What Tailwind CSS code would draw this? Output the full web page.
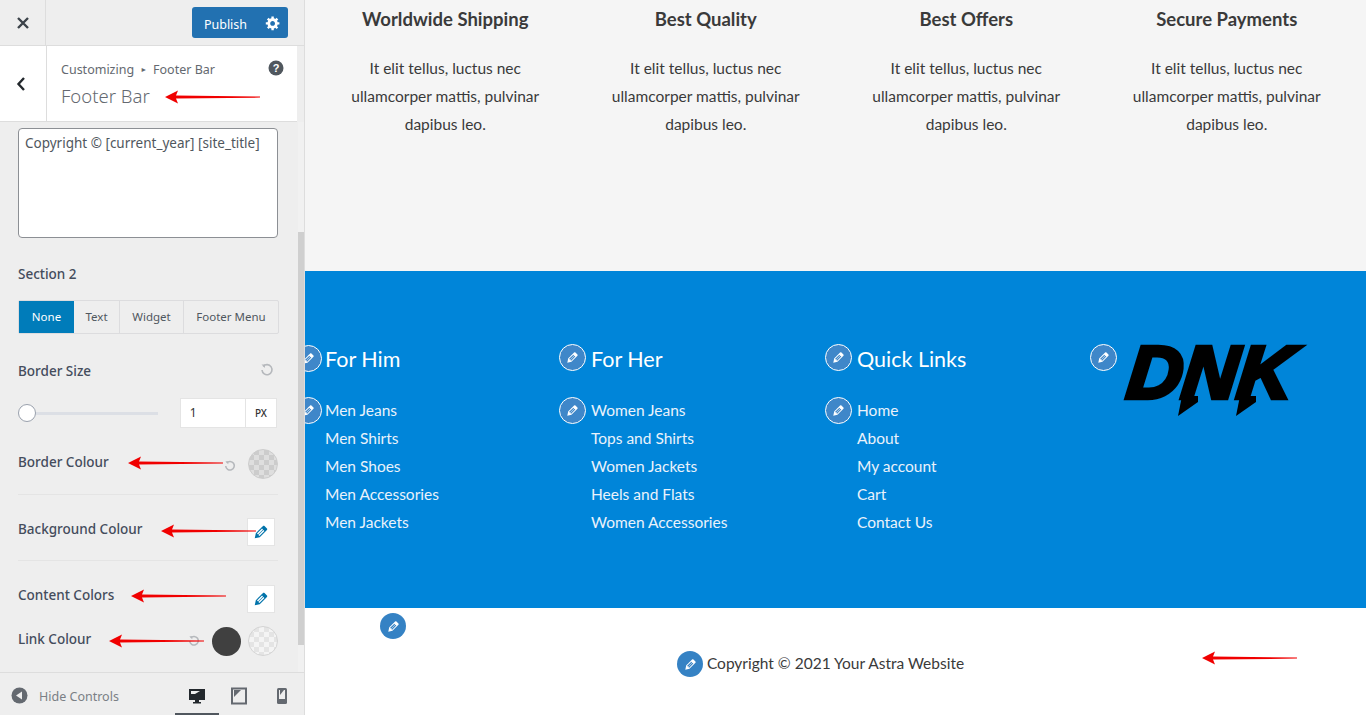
<!doctype html>
<html lang="en">

<head>
  <meta charset="UTF-8" />
  <meta name="viewport" content="width=device-width, initial-scale=1.0" />
  <title>Customizing Footer Bar</title>
  <script src="https://cdn.jsdelivr.net/npm/@tailwindcss/browser@4"></script>
</head>

<body class="h-[715px] w-[1366px] overflow-hidden bg-white font-['Lato',sans-serif] flex relative">

  <!-- customizer sidebar -->
  <aside class="w-[305px] h-[715px] shrink-0 bg-[#eeeeee] flex flex-col relative font-['Noto_Sans',sans-serif] text-[#444c5c] border-r border-[#dddddd]">
    <!-- top bar -->
    <div class="h-[46px] shrink-0 flex items-center border-b border-[#dddddd] pr-[16px]">
      <div class="w-[46px] h-full flex items-center justify-center border-r border-[#dddddd]">
        <svg width="14" height="14" viewBox="0 0 14 14" class="text-[#3c434a]"><path d="M2 2l10 10M12 2L2 12" stroke="currentColor" stroke-width="2.4" /></svg>
      </div>
      <div class="ml-auto flex h-[31px] w-[96px] rounded-[3px] bg-[#2271b1] text-white items-center">
        <span class="w-[66px] text-center text-[12.5px] pt-[5px] pl-[1px]">Publish</span>
        <svg width="16" height="16" viewBox="0 0 20 20" class="ml-[7px]" fill="currentColor"><path d="M18 12h-2.18c-.17.7-.44 1.35-.81 1.93l1.54 1.54-2.1 2.1-1.54-1.54c-.58.36-1.23.63-1.91.79V19H8v-2.18c-.68-.16-1.33-.43-1.91-.79l-1.54 1.54-2.12-2.12 1.54-1.54c-.36-.58-.63-1.23-.79-1.91H1V9.03h2.17c.16-.7.44-1.35.8-1.94L2.43 5.55l2.1-2.1 1.54 1.54c.58-.37 1.24-.64 1.93-.81V2h3v2.18c.68.16 1.33.43 1.91.79l1.54-1.54 2.12 2.12-1.54 1.54c.36.59.64 1.24.8 1.94H18V12zm-8.5 1.5c1.66 0 3-1.34 3-3s-1.34-3-3-3-3 1.34-3 3 1.34 3 3 3z" /></svg>
      </div>
    </div>

    <!-- section title -->
    <div class="h-[76px] w-[297px] shrink-0 bg-white flex border-b border-[#dddddd]">
      <div class="w-[47px] h-full flex items-center justify-center border-r border-[#dddddd] pr-[4px]">
        <svg width="10" height="16" viewBox="0 0 10 16"><path d="M8 2L2.5 8 8 14" fill="none" stroke="#23282d" stroke-width="2.4" /></svg>
      </div>
      <div class="pl-[14px] pt-[15px] flex-1 relative">
        <div class="text-[12.5px] leading-[18px] text-[#646970] flex items-center">Customizing <span class="text-[7px] mx-[6px]">&#9658;</span> Footer Bar</div>
        <div class="text-[18.5px] leading-[28px] text-[#646970] mt-[3px] font-light">Footer Bar</div>
        <svg width="16" height="16" viewBox="0 0 16 16" class="absolute right-[13px] top-[14px]"><circle cx="8" cy="8" r="7.5" fill="#50575e" /><text x="8" y="12" text-anchor="middle" font-size="11" font-weight="700" fill="#fff" font-family="Liberation Sans">?</text></svg>
      </div>
    </div>

    <!-- controls -->
    <div class="flex-1 pl-[18px] pr-[27px] pt-[6px] relative overflow-hidden">
      <div class="w-[260px] h-[110px] rounded-[4px] border border-[#8c8f94] bg-white px-[6px] py-[4px] text-[13.5px] leading-[20px] text-[#50575e]">Copyright © [current_year] [site_title]</div>

      <div class="mt-[26px] text-[13.5px] leading-[20px] font-medium">Section 2</div>
      <div class="mt-[16px] flex h-[34px] w-[261px] border border-[#dcdcde] rounded-[2px] text-[11.5px] text-[#50575e]">
        <div class="w-[55px] bg-[#007cba] text-white flex items-center justify-center">None</div>
        <div class="w-[46px] border-r border-[#dcdcde] flex items-center justify-center">Text</div>
        <div class="w-[64px] border-r border-[#dcdcde] flex items-center justify-center">Widget</div>
        <div class="flex-1 flex items-center justify-center">Footer Menu</div>
      </div>

      <div class="mt-[26px] flex items-center justify-between h-[20px]">
        <span class="text-[13.5px] font-medium pt-[2px]">Border Size</span>
        <svg width="14" height="14" viewBox="0 0 14 14" class="mr-[3px]"><path d="M3.2 3.4A5 5 0 1 1 2 7" fill="none" stroke="#b5b8bc" stroke-width="1.6" /><path d="M1.5 1.5h3.5v3.5z" fill="#b5b8bc" /></svg>
      </div>
      <div class="mt-[18px] flex items-center h-[30px]">
        <div class="relative w-[141px] h-[3px] bg-[#dcdfe5]">
          <div class="absolute left-0 top-[-8px] w-[18px] h-[18px] rounded-full bg-white border border-[#9aa1ad]"></div>
        </div>
        <div class="ml-[22px] flex h-[30px] w-[98px] bg-white border border-[#e4e4e4] text-[12px] text-[#333333] items-center">
          <span class="w-[65px] pl-[9px] border-r border-[#e4e4e4] leading-[28px]">1</span>
          <span class="flex-1 text-center text-[10px] font-medium">PX</span>
        </div>
      </div>

      <div class="mt-[21px] flex items-center h-[30px] w-[260px]">
        <span class="text-[13.5px] font-medium mb-[3px]">Border Colour</span>
        <svg width="12" height="12" viewBox="0 0 14 14" class="ml-auto mr-[12px] mt-[4px]"><path d="M3.2 3.4A5 5 0 1 1 2 7" fill="none" stroke="#b5b8bc" stroke-width="1.8" /><path d="M1.5 1.5h3.5v3.5z" fill="#b5b8bc" /></svg>
        <div class="w-[30px] h-[30px] rounded-full border border-[#cccccc] bg-[repeating-conic-gradient(#cccccc_0_25%,#dedede_0_50%)] bg-[length:10px_10px]"></div>
      </div>
      <div class="mt-[15px] w-[260px] border-t border-[#e4e4e4]"></div>

      <div class="mt-[23px] flex items-center h-[28px] w-[257px]">
        <span class="text-[13.5px] font-medium mb-[6px]">Background Colour</span>
        <div class="ml-auto w-[28px] h-[28px] bg-white border border-[#e4e4e4] flex items-center justify-center">
          <svg width="18" height="18" viewBox="0 0 20 20" fill="#0073aa"><path d="M13.89 3.39l2.71 2.72c.46.46.42 1.24.03 1.64l-8.01 8.02-5.56 1.16 1.16-5.58s7.6-7.63 7.99-8.03c.39-.39 1.22-.39 1.68.07zm-2.73 2.79l-5.59 5.61 1.11 1.11 5.54-5.65zm-2.97 8.23l5.58-5.6-1.07-1.08-5.59 5.6z" /></svg>
        </div>
      </div>
      <div class="mt-[14px] w-[260px] border-t border-[#e4e4e4]"></div>

      <div class="mt-[24px] flex items-center h-[28px] w-[257px]">
        <span class="text-[13.5px] font-medium mb-[8px]">Content Colors</span>
        <div class="ml-auto w-[28px] h-[28px] bg-white border border-[#e4e4e4] flex items-center justify-center">
          <svg width="18" height="18" viewBox="0 0 20 20" fill="#0073aa"><path d="M13.89 3.39l2.71 2.72c.46.46.42 1.24.03 1.64l-8.01 8.02-5.56 1.16 1.16-5.58s7.6-7.63 7.99-8.03c.39-.39 1.22-.39 1.68.07zm-2.73 2.79l-5.59 5.61 1.11 1.11 5.54-5.65zm-2.97 8.23l5.58-5.6-1.07-1.08-5.59 5.6z" /></svg>
        </div>
      </div>

      <div class="mt-[13px] flex items-center h-[30px] w-[260px]">
        <span class="text-[13.5px] font-medium mb-[3px]">Link Colour</span>
        <svg width="12" height="12" viewBox="0 0 14 14" class="ml-auto mr-[12px]"><path d="M3.2 3.4A5 5 0 1 1 2 7" fill="none" stroke="#b5b8bc" stroke-width="1.8" /><path d="M1.5 1.5h3.5v3.5z" fill="#b5b8bc" /></svg>
        <div class="w-[29px] h-[29px] rounded-full bg-[#404040] mr-[7px]"></div>
        <div class="w-[30px] h-[30px] rounded-full border border-[#d4d4d4] bg-[repeating-conic-gradient(#e4e4e4_0_25%,#f4f4f4_0_50%)] bg-[length:10px_10px]"></div>
      </div>
    </div>

    <!-- scrollbar -->
    <div class="absolute right-0 top-[122px] bottom-[43px] w-[6px] bg-[#f1f1f1]">
      <div class="absolute left-0 right-0 top-[110px] bottom-[27px] bg-[#cfcfcf]"></div>
    </div>

    <!-- footer controls -->
    <div class="h-[43px] shrink-0 border-t border-[#dddddd] flex items-center text-[12.5px] text-[#7a7f85] relative pt-[5px]">
      <svg width="17" height="17" viewBox="0 0 17 17" class="ml-[11px] mb-[3px]"><circle cx="8.5" cy="8.5" r="8" fill="#646970" /><path d="M11 4.5v8L5 8.5z" fill="#eeeeee" /></svg>
      <span class="ml-[11px] pt-[2px]">Hide Controls</span>
      <div class="absolute left-[175px] top-0 bottom-0 w-[44px] flex items-center justify-center border-b-[2px] border-[#50575e] pt-[5px]">
        <svg width="18" height="18" viewBox="0 0 18 18"><path d="M1 2h16v11H11v2h2v1.5H5V15h2v-2H1z" fill="#23282d" /><path d="M3 4h9L7 7H3z" fill="#eeeeee" /></svg>
      </div>
      <svg width="16" height="18" viewBox="0 0 16 18" class="absolute left-[231px] top-[14px]"><rect x="1" y="1.5" width="14" height="15" fill="none" stroke="#646970" stroke-width="2" /><path d="M3 3h7L3 10z" fill="#646970" /></svg>
      <svg width="12" height="18" viewBox="0 0 12 18" class="absolute left-[276px] top-[14px]"><rect x="1" y="1" width="10" height="16" rx="1.5" fill="#646970" /><rect x="3" y="3" width="6" height="9" fill="#eeeeee" /><path d="M4 3h4L4 8z" fill="#646970" /></svg>
    </div>
  </aside>

  <!-- site preview -->
  <main class="flex-1 h-[715px] flex flex-col overflow-hidden relative">
    <section class="h-[271px] shrink-0 bg-[#f5f5f5] grid grid-cols-4 pl-[10px] pr-[9px] text-center text-[#3a3a3a]">
      <div class="px-[30px]">
        <h3 class="text-[18.5px] leading-[38px] font-bold">Worldwide Shipping</h3>
        <p class="mt-[16px] text-[15.5px] leading-[28px]">It elit tellus, luctus nec ullamcorper mattis, pulvinar dapibus leo.</p>
      </div>
      <div class="px-[30px]">
        <h3 class="text-[18.5px] leading-[38px] font-bold">Best Quality</h3>
        <p class="mt-[16px] text-[15.5px] leading-[28px]">It elit tellus, luctus nec ullamcorper mattis, pulvinar dapibus leo.</p>
      </div>
      <div class="px-[30px]">
        <h3 class="text-[18.5px] leading-[38px] font-bold">Best Offers</h3>
        <p class="mt-[16px] text-[15.5px] leading-[28px]">It elit tellus, luctus nec ullamcorper mattis, pulvinar dapibus leo.</p>
      </div>
      <div class="px-[30px]">
        <h3 class="text-[18.5px] leading-[38px] font-bold">Secure Payments</h3>
        <p class="mt-[16px] text-[15.5px] leading-[28px]">It elit tellus, luctus nec ullamcorper mattis, pulvinar dapibus leo.</p>
      </div>
    </section>

    <section class="h-[337px] shrink-0 bg-[#0085d9] flex pl-[20px] pt-[71px] text-[#eaf2fb] relative">
      <div class="w-[266px]">
        <h4 class="text-[21.5px] leading-[34px] text-white">For Him</h4>
        <ul class="mt-[20px] text-[15.5px] leading-[28px]">
          <li>Men Jeans</li>
          <li>Men Shirts</li>
          <li>Men Shoes</li>
          <li>Men Accessories</li>
          <li>Men Jackets</li>
        </ul>
      </div>
      <div class="w-[266px]">
        <h4 class="text-[21.5px] leading-[34px] text-white">For Her</h4>
        <ul class="mt-[20px] text-[15.5px] leading-[28px]">
          <li>Women Jeans</li>
          <li>Tops and Shirts</li>
          <li>Women Jackets</li>
          <li>Heels and Flats</li>
          <li>Women Accessories</li>
        </ul>
      </div>
      <div class="w-[266px]">
        <h4 class="text-[21.5px] leading-[34px] text-white">Quick Links</h4>
        <ul class="mt-[20px] text-[15.5px] leading-[28px]">
          <li>Home</li>
          <li>About</li>
          <li>My account</li>
          <li>Cart</li>
          <li>Contact Us</li>
        </ul>
      </div>
      <!-- logo -->
      <div class="absolute left-[823px] top-[57px] origin-left scale-x-[1.03] skew-x-[-6deg] text-[74px] leading-[90px] text-black italic font-black font-['Liberation_Sans',sans-serif] [-webkit-text-stroke:4.5px_black]">DNK</div>
      <svg width="80" height="24" viewBox="0 0 80 24" class="absolute left-[871px] top-[122px]" fill="#000"><path d="M2 23L6 3H22V9z" /><path d="M60 23L64 3H80V9z" /></svg>
    </section>

    <section class="flex-1 bg-white flex items-center justify-center pt-[5px] text-[15.5px] text-[#3a3a3a]">Copyright © 2021 Your Astra Website</section>

    <!-- edit shortcuts -->
    <div class="absolute left-[-10px] top-[345px] w-[27px] h-[27px] rounded-full bg-[#3f87c9] border border-white flex items-center justify-center"><svg width="15" height="15" viewBox="0 0 20 20" fill="#fff"><path d="M13.89 3.39l2.71 2.72c.46.46.42 1.24.03 1.64l-8.01 8.02-5.56 1.16 1.16-5.58s7.6-7.63 7.99-8.03c.39-.39 1.22-.39 1.68.07zm-2.73 2.79l-5.59 5.61 1.11 1.11 5.54-5.65zm-2.97 8.23l5.58-5.6-1.07-1.08-5.59 5.6z" /></svg></div>
    <div class="absolute left-[-10px] top-[397px] w-[27px] h-[27px] rounded-full bg-[#3f87c9] border border-white flex items-center justify-center"><svg width="15" height="15" viewBox="0 0 20 20" fill="#fff"><path d="M13.89 3.39l2.71 2.72c.46.46.42 1.24.03 1.64l-8.01 8.02-5.56 1.16 1.16-5.58s7.6-7.63 7.99-8.03c.39-.39 1.22-.39 1.68.07zm-2.73 2.79l-5.59 5.61 1.11 1.11 5.54-5.65zm-2.97 8.23l5.58-5.6-1.07-1.08-5.59 5.6z" /></svg></div>
    <div class="absolute left-[254px] top-[344px] w-[27px] h-[27px] rounded-full bg-[#3f87c9] border border-white flex items-center justify-center"><svg width="15" height="15" viewBox="0 0 20 20" fill="#fff"><path d="M13.89 3.39l2.71 2.72c.46.46.42 1.24.03 1.64l-8.01 8.02-5.56 1.16 1.16-5.58s7.6-7.63 7.99-8.03c.39-.39 1.22-.39 1.68.07zm-2.73 2.79l-5.59 5.61 1.11 1.11 5.54-5.65zm-2.97 8.23l5.58-5.6-1.07-1.08-5.59 5.6z" /></svg></div>
    <div class="absolute left-[254px] top-[397px] w-[27px] h-[27px] rounded-full bg-[#3f87c9] border border-white flex items-center justify-center"><svg width="15" height="15" viewBox="0 0 20 20" fill="#fff"><path d="M13.89 3.39l2.71 2.72c.46.46.42 1.24.03 1.64l-8.01 8.02-5.56 1.16 1.16-5.58s7.6-7.63 7.99-8.03c.39-.39 1.22-.39 1.68.07zm-2.73 2.79l-5.59 5.61 1.11 1.11 5.54-5.65zm-2.97 8.23l5.58-5.6-1.07-1.08-5.59 5.6z" /></svg></div>
    <div class="absolute left-[520px] top-[344px] w-[27px] h-[27px] rounded-full bg-[#3f87c9] border border-white flex items-center justify-center"><svg width="15" height="15" viewBox="0 0 20 20" fill="#fff"><path d="M13.89 3.39l2.71 2.72c.46.46.42 1.24.03 1.64l-8.01 8.02-5.56 1.16 1.16-5.58s7.6-7.63 7.99-8.03c.39-.39 1.22-.39 1.68.07zm-2.73 2.79l-5.59 5.61 1.11 1.11 5.54-5.65zm-2.97 8.23l5.58-5.6-1.07-1.08-5.59 5.6z" /></svg></div>
    <div class="absolute left-[520px] top-[397px] w-[27px] h-[27px] rounded-full bg-[#3f87c9] border border-white flex items-center justify-center"><svg width="15" height="15" viewBox="0 0 20 20" fill="#fff"><path d="M13.89 3.39l2.71 2.72c.46.46.42 1.24.03 1.64l-8.01 8.02-5.56 1.16 1.16-5.58s7.6-7.63 7.99-8.03c.39-.39 1.22-.39 1.68.07zm-2.73 2.79l-5.59 5.61 1.11 1.11 5.54-5.65zm-2.97 8.23l5.58-5.6-1.07-1.08-5.59 5.6z" /></svg></div>
    <div class="absolute left-[785px] top-[344px] w-[27px] h-[27px] rounded-full bg-[#3f87c9] border border-white flex items-center justify-center"><svg width="15" height="15" viewBox="0 0 20 20" fill="#fff"><path d="M13.89 3.39l2.71 2.72c.46.46.42 1.24.03 1.64l-8.01 8.02-5.56 1.16 1.16-5.58s7.6-7.63 7.99-8.03c.39-.39 1.22-.39 1.68.07zm-2.73 2.79l-5.59 5.61 1.11 1.11 5.54-5.65zm-2.97 8.23l5.58-5.6-1.07-1.08-5.59 5.6z" /></svg></div>
    <div class="absolute left-[75px] top-[613px] w-[26px] h-[26px] rounded-full bg-[#3582c4] flex items-center justify-center"><svg width="15" height="15" viewBox="0 0 20 20" fill="#fff"><path d="M13.89 3.39l2.71 2.72c.46.46.42 1.24.03 1.64l-8.01 8.02-5.56 1.16 1.16-5.58s7.6-7.63 7.99-8.03c.39-.39 1.22-.39 1.68.07zm-2.73 2.79l-5.59 5.61 1.11 1.11 5.54-5.65zm-2.97 8.23l5.58-5.6-1.07-1.08-5.59 5.6z" /></svg></div>
    <div class="absolute left-[372px] top-[651px] w-[26px] h-[26px] rounded-full bg-[#3582c4] flex items-center justify-center"><svg width="15" height="15" viewBox="0 0 20 20" fill="#fff"><path d="M13.89 3.39l2.71 2.72c.46.46.42 1.24.03 1.64l-8.01 8.02-5.56 1.16 1.16-5.58s7.6-7.63 7.99-8.03c.39-.39 1.22-.39 1.68.07zm-2.73 2.79l-5.59 5.61 1.11 1.11 5.54-5.65zm-2.97 8.23l5.58-5.6-1.07-1.08-5.59 5.6z" /></svg></div>
  </main>

  <!-- red annotation arrows -->
  <svg width="96" height="14" viewBox="0 0 96 14" class="absolute left-[165px] top-[90px]" fill="#f00000"><path d="M0 7L13 .5 11 5.6 95 6.6V7.6L11 8.6 13 13.5z" /></svg>
  <svg width="96" height="14" viewBox="0 0 96 14" class="absolute left-[128px] top-[456px]" fill="#f00000"><path d="M0 7L13 .5 11 5.6 95 6.6V7.6L11 8.6 13 13.5z" /></svg>
  <svg width="96" height="14" viewBox="0 0 96 14" class="absolute left-[161px] top-[524px]" fill="#f00000"><path d="M0 7L13 .5 11 5.6 95 6.6V7.6L11 8.6 13 13.5z" /></svg>
  <svg width="96" height="14" viewBox="0 0 96 14" class="absolute left-[131px] top-[589px]" fill="#f00000"><path d="M0 7L13 .5 11 5.6 95 6.6V7.6L11 8.6 13 13.5z" /></svg>
  <svg width="96" height="14" viewBox="0 0 96 14" class="absolute left-[109px] top-[634px]" fill="#f00000"><path d="M0 7L13 .5 11 5.6 95 6.6V7.6L11 8.6 13 13.5z" /></svg>
  <svg width="96" height="14" viewBox="0 0 96 14" class="absolute left-[1202px] top-[651px]" fill="#f00000"><path d="M0 7L13 .5 11 5.6 95 6.6V7.6L11 8.6 13 13.5z" /></svg>
</body>

</html>
